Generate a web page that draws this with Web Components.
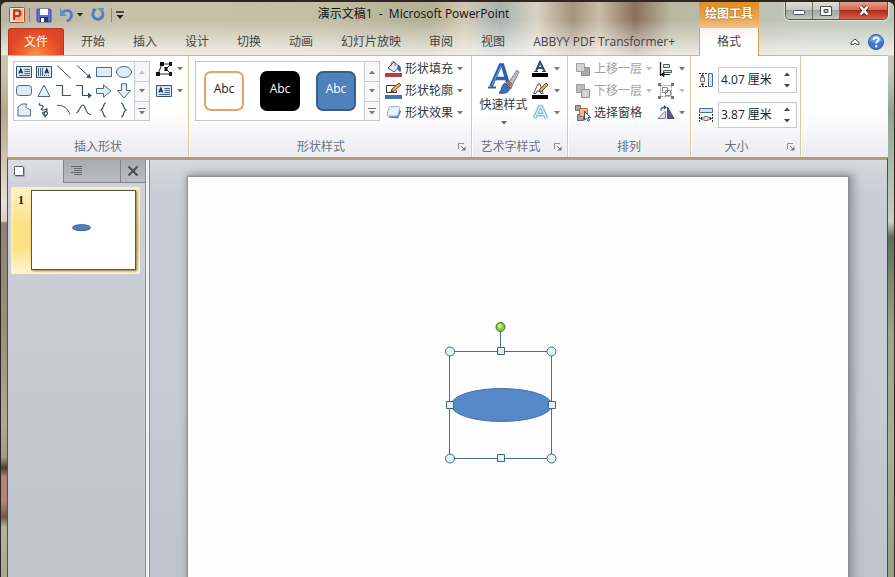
<!DOCTYPE html>
<html lang="zh-CN">
<head>
<meta charset="utf-8">
<title>演示文稿1 - Microsoft PowerPoint</title>
<style>
  html, body { margin: 0; height: 100%; }
  body {
    font: 12px/16px "Open Sans", "Noto Sans CJK SC", sans-serif;
    color: #3b3b3b; background: #2a2320; overflow: hidden;
  }
</style>
</head>
<body>
<app-window></app-window>
<script>
const ICONS = {
  ppt: [16, 16, `<rect x=".5" y=".5" width="15" height="15" rx="1" fill="#fbe0d2" stroke="#b8482a"/><path d="M2 2h12v12H2z" fill="#f4b394"/><path d="M2 2h8l-3 12H2z" fill="#fff" opacity=".5"/><path d="M5.2 13V3.500h3.300a2.800 2.800 0 0 1 0 5.600H5.200" fill="none" stroke="#c23f16" stroke-width="2.400"/>`],
  save: [16, 16, `<path d="M1 2h13l1 1v12H2l-1-1z" fill="#5a6fce" stroke="#3a4da6"/><path d="M4 2h8v6H4z" fill="#f4f7ff"/><path d="M4 10h8v5H4z" fill="#27356f"/><path d="M5 11h3v4H5z" fill="#fff"/>`],
  undo: [16, 16, `<path d="M3.500 5.500C8 1.500 13 4 12.500 8.500 12.300 11 10.500 13 8 14.500" fill="none" stroke="#4a7ccc" stroke-width="2.600"/><path d="M1 1.500v7.500h7z" fill="#5d92dc"/>`],
  redo: [16, 16, `<path d="M4.500 3.500A5 5 0 1 0 12 4.500" fill="none" stroke="#4a7ccc" stroke-width="3"/><path d="M7.500 1H14l-1.500 6.500z" fill="#5d92dc"/><path d="M2 1.500l5 .5-3 4z" fill="#4a7ccc"/>`],
  custom: [10, 12, `<path d="M1 3h8" stroke="#222" stroke-width="1.500"/><path d="M1.500 6h7L5 10z" fill="#222"/>`],
  min: [14, 10, `<rect x="1.500" y="4.500" width="11" height="4" rx="1" fill="#fff" stroke="#4c5157"/>`],
  max: [14, 10, `<path d="M1.500.5h11v9h-11z" fill="#fff" stroke="#4c5157"/><path d="M5 3.500h4v3H5z" fill="#b9bdb8" stroke="#4c5157"/>`],
  winclose: [14, 11, `<path d="M3.500 1.500l7 8M10.500 1.500l-7 8" stroke="#5a2420" stroke-width="4.200"/><path d="M3.500 1.500l7 8M10.500 1.500l-7 8" stroke="#fff" stroke-width="2.600"/>`],
  up: [10, 8, `<path d="M1 6.500v-2L5 1l4 3.500v2H6.800L5 5 3.200 6.500z" fill="#fff" stroke="#444"/>`],
  help: [16, 16, `<circle cx="8" cy="8" r="7.500" fill="#3f78c8" stroke="#275aa6"/><path d="M1.500 7a6.500 6 0 0 1 13 0c-4 2-9 2-13 0" fill="#7caae6" opacity=".7"/><path d="M5.500 6c0-3.600 5.400-3.300 5.100-.4C10.400 7.300 8.200 7.300 8.200 9.600" fill="none" stroke="#fff" stroke-width="1.900"/><circle cx="8.200" cy="12.300" r="1.200" fill="#fff"/>`],
  textbox: [16, 14, `<path d="M.5 1.500h15v11H.5z" fill="#d9e7f5" stroke="#35506c"/><path d="M3 8.500L4.800 4 6.500 8.500M3.500 7h2.500" fill="none" stroke="#1f2f44" stroke-width="1.300"/><path d="M8.500 4.500H14M8.500 6.500H14M8.500 8.500H14M3 10.500h11" stroke="#41658c"/>`],
  vtextbox: [16, 14, `<path d="M.5 1.500h15v11H.5z" fill="#d9e7f5" stroke="#35506c"/><path d="M9 8.500L10.800 4l1.700 4.500M9.500 7H12" fill="none" stroke="#1f2f44" stroke-width="1.300"/><path d="M2.500 3v8M4.500 3v8M6.500 3v8M8.500 10v1M10.500 10v1M12.500 10v1" stroke="#41658c"/>`],
  line: [16, 16, `<path d="M1 1.500l14 13" stroke="#3e4f63"/>`],
  arrowline: [16, 16, `<path d="M1 1.500l12 11" stroke="#3e4f63"/><path d="M15 14.500l-1.500-5-3.500 4z" fill="#3e4f63"/>`],
  rect: [16, 16, `<path d="M.5 3.500h15v9H.5z" fill="#dfeaf4" stroke="#46688c"/>`],
  oval: [16, 16, `<ellipse cx="8" cy="8" rx="7.500" ry="5.500" fill="#dfeaf4" stroke="#46688c"/>`],
  round: [16, 16, `<rect x=".5" y="2.500" width="15" height="10" rx="3" fill="#dfeaf4" stroke="#46688c"/>`],
  tri: [16, 16, `<path d="M8 2l6 11.500H2z" fill="#e4eef6" stroke="#46688c"/>`],
  elbow: [16, 16, `<path d="M0 2.500h6.500v10H15" fill="none" stroke="#3e4f63" stroke-width="1.200"/>`],
  elbowarrow: [16, 16, `<path d="M0 2.500h6.500v10H13" fill="none" stroke="#3e4f63" stroke-width="1.200"/><path d="M16 12.500l-4-3v6z" fill="#3e4f63"/>`],
  right: [16, 16, `<path d="M.5 5.500h7V1.800L15 8l-7.500 6.200v-3.700h-7z" fill="#e4eef6" stroke="#46688c"/>`],
  down: [16, 16, `<path d="M5.500.8h5v6.700h4L8 15 1.500 7.500h4z" fill="#e4eef6" stroke="#46688c"/>`],
  freeform: [16, 16, `<path d="M2 5l4-3h5c-3 4 1 4.500 3.500 5.500V14H2z" fill="#e4eef6" stroke="#46688c"/>`],
  scribble: [16, 16, `<path d="M4 1C1 5 7 2 7 4.500S3 8 7 8s4-3 4 0-6 1-4 4 6 0 4-2-5 4-1 5" fill="none" stroke="#3e4f63" stroke-width="1.200"/>`],
  arc: [16, 16, `<path d="M1 3.500c6-1 11 3 13 9" fill="none" stroke="#3e4f63"/>`],
  curve: [16, 16, `<path d="M.5 11C4 9 4 3 7 3s2 10 8 9.500" fill="none" stroke="#3e4f63" stroke-width="1.100"/>`],
  lbrace: [16, 16, `<path d="M10 1C6.500 1 8.500 6.500 5 8c3.500 1.500 1.500 7 5 7" fill="none" stroke="#3e4f63" stroke-width="1.200"/>`],
  rbrace: [16, 16, `<path d="M5 1c3.500 0 1.500 5.500 5 7-3.500 1.500-1.500 7-5 7" fill="none" stroke="#3e4f63" stroke-width="1.200"/>`],
  editshape: [17, 16, `<path d="M6 3h9l-5 5 5 5H2z" fill="#fff" stroke="#222"/><path d="M4 1h4v4H4zM13 1h3v4h-3zM8.500 6h3v4h-3zM0 11h4v4H0zM13 11h3v4h-3z" fill="#111"/>`],
  fill: [18, 18, `<path d="M0 13h17v4H0z" fill="#b5403e"/><path d="M3 8l6-6 6 5-6 5z" fill="#e8edf5" stroke="#4c5b73"/><path d="M6 6c0-7 5-5 4 0" fill="none" stroke="#5c6476"/><path d="M13 5c3 0 3.500 4 2.500 7-2 0-2-3-3.500-4z" fill="#3a63a8"/>`],
  outline: [18, 18, `<path d="M0 13h17v4H0z" fill="#4472ae"/><path d="M1.500 3.500h9M1.500 3.500v7h10v-2" fill="none" stroke="#333"/><path d="M6 10l1-3 7-6 2 2-7 6z" fill="#f0b552" stroke="#70471c"/><path d="M6 10l.6-2 1.300 1.200z" fill="#222"/>`],
  effect: [18, 18, `<path d="M3 13.500l10 1 3-7-2-3z" fill="#5f7fb4"/><path d="M6 2.500h7.500c1 0 1.500.8 1.200 2l-1.500 6c-.3 1-1 1.500-2 1.500H3.500c-1 0-1.600-.8-1.300-2l1.600-5.800c.3-1 1.200-1.700 2.200-1.700z" fill="#eaf0fa" stroke="#9cacd0"/>`],
  quick: [32, 36, `<path d="M3 25.500L12.500 4h2L21 25.500M7.500 17.500h11" fill="none" stroke="#2d62b0" stroke-width="3.600"/><path d="M0 26.500h8M17 26.500h7" stroke="#2d62b0" stroke-width="2"/><path d="M4 24L13 5" stroke="#7aa9e3"/><path d="M19 24L29 9l2 2-8 16z" fill="#b9bec8" stroke="#777e8c"/><path d="M17 22l5 5c-1 5-6 6-11 5 3-2 2-8 6-10z" fill="#3f6fb7" stroke="#2f558f"/><path d="M18 22l4 4 2.500-3-3.500-4z" fill="#a3744a"/>`],
  fontcolor: [18, 18, `<path d="M0 13h16v4H0z" fill="#000"/><path d="M4 11L8 2l4.500 9M5.500 8h5.500" fill="none" stroke="#2b4a7c" stroke-width="2"/><path d="M2 11.500h4M10 11.500h4" stroke="#2b4a7c"/>`],
  fontline: [18, 18, `<path d="M0 13h16v4H0z" fill="#000"/><path d="M1.500 11.500L6 2h2l3 9.500H9L8 9H5l-1 2.500z" fill="#fff" stroke="#555"/><path d="M7 10l1-3 6-6 2 2-6 6z" fill="#e8ae60" stroke="#70471c"/>`],
  fonteffect: [18, 18, `<path d="M2.500 14.500L7.500 3h2l5 11.500M5 10.500h7" fill="none" stroke="#a5d6ec" stroke-width="4.500" opacity=".7"/><path d="M2.500 14.500L7.500 3h2l5 11.500M5 10.500h7" fill="none" stroke="#6cb6d8" stroke-width="3"/><path d="M2.500 14.500L7.500 3h2l5 11.500M5 10.500h7" fill="none" stroke="#fff" stroke-width="1.200"/>`],
  forward: [16, 16, `<path d="M6.500 6.500h8v8h-8z" fill="#a9a9a9" stroke="#8f8f8f"/><path d="M1.500 2.500h8v8h-8z" fill="#d4d4d4" stroke="#a0a0a0"/>`],
  backward: [16, 16, `<path d="M1.500 1.500h8v8h-8z" fill="#bdbdbd" stroke="#a0a0a0"/><path d="M6.500 6.500h8v8h-8z" fill="#d4d4d4" stroke="#8f8f8f"/>`],
  selpane: [16, 17, `<path d="M.5.5h5v5h-5zM2.500 9.500h6v6h-6z" fill="#aaa" stroke="#6d6d6d"/><path d="M4.500 3.500h8v8h-8z" fill="#f2bb80" stroke="#a96e31"/><path d="M9.500 6v9l2-1.800 1.500 3 1.500-.8-1.500-2.900h2.500z" fill="#fff" stroke="#33507d"/>`],
  align: [16, 16, `<path d="M2.500 1v14" stroke="#222" stroke-width="1.400"/><path d="M5.500 3.500h6v3h-6z" fill="#dbe3ee" stroke="#4d5868"/><path d="M5.500 9.500h8v2h-8z" fill="#dbe3ee" stroke="#4d5868"/><path d="M3 13.500h9M6 11.500l-3 2 3 2z" stroke="#222" fill="#222"/>`],
  group: [16, 16, `<path d="M2.500 2.500h11v11h-11z" fill="none" stroke="#999" stroke-dasharray="2 1"/><path d="M4.500 4.500h5v5h-5zM7.500 7.500h5v5h-5z" fill="none" stroke="#888"/><path d="M0 0h3v3H0zM13 0h3v3h-3zM0 13h3v3H0zM13 13h3v3h-3z" fill="#777"/>`],
  rotate: [18, 16, `<path d="M8.500 6v7.500H1z" fill="#dde1e8" stroke="#7e8692"/><path d="M10.500 2v11.500h6.500z" fill="#66569a" stroke="#4a3d7c"/><path d="M4 5.500c0-2.500 2-3.500 4-3" fill="none" stroke="#35507e" stroke-width="1.300"/><path d="M7 0l3 2.500-3 2z" fill="#35507e"/>`],
  height: [16, 18, `<path d="M10.500 2.500h4v13h-4z" fill="#d5e2f3" stroke="#4e6c95"/><path d="M1 2.500h8M1 15.500h8" stroke="#333" stroke-dasharray="2 1"/><path d="M2.500 6.500h4v4h-4z" fill="#eee" stroke="#777"/><path d="M4.500 3L2.500 5.500h4zM4.500 15l-2-2.500h4z" fill="#222"/>`],
  width: [16, 18, `<path d="M1.500 2.500h13v4h-13z" fill="#d5e2f3" stroke="#4e6c95"/><path d="M1.500 8v8M14.500 8v8" stroke="#333" stroke-dasharray="2 1"/><path d="M6 10.500h4v4H6z" fill="#eee" stroke="#777"/><path d="M2 12.500L4.500 10.500v4zM14 12.500l-2.500-2v4z" fill="#222"/>`],
  launcher: [8, 8, `<path d="M.5 6V.5H6" fill="none" stroke="#8a8f99"/><path d="M3 3l3 3" stroke="#777"/><path d="M7.500 3.500v4h-4z" fill="#777"/>`],
  slide: [11, 11, `<path d="M1.500 1.500h9v9h-9z" fill="#777"/><rect x=".5" y=".5" width="9" height="9" rx="1" fill="#fff" stroke="#55585c"/>`],
  outlinetab: [12, 10, `<path d="M0 .5h11M3 2.500h8M3 4.500h8M0 6.500h11M3 8.500h8" stroke="#65686d"/>`],
  close: [12, 12, `<path d="M1.500 1.500l9 9M10.500 1.500l-9 9" stroke="#4a4c50" stroke-width="2"/>`],
  caret: [6, 4, `<path d="M0 0h6L3 3.500z" fill="currentColor"/>`],
  caretup: [6, 4, `<path d="M0 4h6L3 .5z" fill="currentColor"/>`],
  more: [8, 8, `<path d="M0 1.500h8" stroke="currentColor"/><path d="M1 4h6L4 7.500z" fill="currentColor"/>`]
};

const BUTTON_RESET = `button{font:inherit;color:inherit;background:none;border:0;padding:0;margin:0;display:flex;align-items:center;}`;

function define(name, render) {
  customElements.define(name, class extends HTMLElement {
    connectedCallback() {
      if (this.shadowRoot) return;
      this.attachShadow({ mode: "open" }).innerHTML = render(this);
    }
  });
}
const attr = (el, name, fallback = "") => el.getAttribute(name) ?? fallback;

define("ui-icon", el => {
  const [w, h, body] = ICONS[attr(el, "name")];
  return `<style>:host{display:block;flex:none;width:${w}px;height:${h}px}svg{display:block}</style>
    <svg width="${w}" height="${h}" viewBox="0 0 ${w} ${h}" aria-hidden="true">${body}</svg>`;
});

define("tool-button", el => `<style>
  :host{display:block;color:#33363b}
  :host([dim]){color:#a0a0a0}
  ${BUTTON_RESET}
  button{height:22px;gap:2px;white-space:nowrap}
  .art{width:18px;display:flex;justify-content:center}
  .caret{margin-left:2px;color:#777}
  :host([dim]) .caret{color:#bbb}
  </style>
  <button type="button" aria-label="${attr(el, "label")}" ${el.hasAttribute("dim") ? "disabled" : ""}>
    <span class="art"><ui-icon name="${attr(el, "icon")}"></ui-icon></span><slot></slot>
    ${el.hasAttribute("menu") ? `<ui-icon class="caret" name="caret"></ui-icon>` : ""}
  </button>`);

define("gallery-box", () => `<style>
  :host{display:flex;height:60px;border:1px solid #c3c5c9;box-sizing:border-box;background:#fff}
  .items{flex:1}
  .scroll{display:grid;grid-template-rows:1fr 1fr 1fr;width:14px;border-left:1px solid #c9cacf;color:#777}
  ${BUTTON_RESET}
  button{justify-content:center;background:#f7f7fa}
  button+button{border-top:1px solid #c9cacf}
  :host([top]) button:first-child{color:#c6c6cc}
  </style>
  <div class="items"><slot></slot></div>
  <div class="scroll">
    <button type="button" aria-label="上一行"><ui-icon name="caretup"></ui-icon></button>
    <button type="button" aria-label="下一行"><ui-icon name="caret"></ui-icon></button>
    <button type="button" aria-label="其他"><ui-icon name="more"></ui-icon></button>
  </div>`);

define("shape-gallery", () => {
  const shapes = { textbox: "文本框", vtextbox: "垂直文本框", line: "直线", arrowline: "箭头", rect: "矩形", oval: "椭圆",
    round: "圆角矩形", tri: "等腰三角形", elbow: "肘形连接符", elbowarrow: "肘形箭头连接符", right: "右箭头", down: "下箭头",
    freeform: "任意多边形", scribble: "自由曲线", arc: "弧形", curve: "曲线", lbrace: "左大括号", rbrace: "右大括号" };
  return `<style>:host{display:block;width:137px}${BUTTON_RESET}
    .grid{display:grid;grid-template-columns:repeat(6,20px);grid-auto-rows:19px}
    button{justify-content:center}</style>
    <gallery-box top><div class="grid">${Object.entries(shapes).map(([k, v]) =>
      `<button type="button" aria-label="${v}"><ui-icon name="${k}"></ui-icon></button>`).join("")}</div></gallery-box>`;
});

define("style-gallery", () => `<style>:host{display:block;width:185px}${BUTTON_RESET}
  .row{display:flex;gap:16px;padding:9px 8px 0}
  button{box-sizing:border-box;width:40px;height:40px;border-radius:7px;border:2px solid;justify-content:center;padding-bottom:4px}
  .a{background:#fff;border-color:#e8a265;color:#222}
  .b{background:#000;border-color:#000;color:#fff}
  .c{background:#4f81bd;border-color:#385d8a;color:#fff}</style>
  <gallery-box><div class="row">
    <button type="button" class="a">Abc</button><button type="button" class="b">Abc</button><button type="button" class="c">Abc</button>
  </div></gallery-box>`);

define("ribbon-group", el => `<style>
  :host{display:flex;flex-direction:column;box-sizing:border-box;border-right:1px solid #dfc99a;box-shadow:1px 0 #fff;flex:none}
  .body{flex:1;display:flex;align-items:flex-start;padding-top:5px}
  footer{display:flex;align-items:center;height:20px;padding:0 5px;color:#6b7280}
  footer span{flex:1;text-align:center;white-space:nowrap}
  :host([launcher]) span{padding-right:10px}
  ${BUTTON_RESET}</style>
  <div class="body"><slot></slot></div>
  <footer><span>${attr(el, "label")}</span>${el.hasAttribute("launcher") ?
    `<button type="button" aria-label="${attr(el, "label")}选项"><ui-icon name="launcher"></ui-icon></button>` : ""}</footer>`);

define("size-field", el => `<style>
  :host{display:flex;align-items:center;gap:4px}
  .field{display:flex;flex:1;min-width:0;box-sizing:border-box;height:26px;border:1px solid #c6c8cd;background:#fff}
  input{flex:1;width:0;min-width:0;border:0;padding:0 0 0 2px;background:none;font:inherit;color:#222;outline:0}
  .spin{display:grid;grid-template-rows:1fr 1fr;width:18px;color:#444}
  ${BUTTON_RESET} button{justify-content:center}</style>
  <label for="v"><ui-icon name="${attr(el, "icon")}"></ui-icon></label>
  <div class="field"><input id="v" type="text" aria-label="${attr(el, "label")}" value="${attr(el, "value")}">
  <div class="spin"><button type="button" aria-label="增大"><ui-icon name="caretup"></ui-icon></button>
  <button type="button" aria-label="减小"><ui-icon name="caret"></ui-icon></button></div></div>`);

define("ribbon-tabs", () => `<style>
  :host{display:flex;align-items:flex-end;padding-right:10px}
  ${BUTTON_RESET}
  button{height:27px;padding:0 14px;white-space:nowrap;color:#444}
  .file{width:56px;justify-content:center;padding:0;margin-right:3px;color:#fff;border-radius:3px 3px 0 0;
    border:1px solid #b8351c;border-bottom:0;box-sizing:border-box;
    background:radial-gradient(ellipse at 50% 110%,#f79a4c 0,#ee5a2c 45%,#dc4526 75%)}
  </style>
  <button type="button" class="file">文件</button>
  ${["开始", "插入", "设计", "切换", "动画", "幻灯片放映", "审阅", "视图", "ABBYY PDF Transformer+"]
    .map(t => `<button type="button" role="tab">${t}</button>`).join("")}`);

define("quick-access", () => `<style>
  :host{display:flex;align-items:center;width:119px;height:26px;padding-left:1px}
  ${BUTTON_RESET}
  .sep{flex:none;width:1px;height:14px;background:#8c8877;margin:0 6px 0 4px}
  .gap{margin-left:7px}.near{margin-left:2px;color:#222}
  .last{margin:0 3px 0 5px}</style>
  <button type="button" aria-label="PowerPoint"><ui-icon name="ppt"></ui-icon></button><span class="sep"></span>
  <button type="button" aria-label="保存"><ui-icon name="save"></ui-icon></button>
  <button type="button" class="gap" aria-label="撤消"><ui-icon name="undo"></ui-icon></button>
  <button type="button" class="near" aria-label="撤消列表"><ui-icon name="caret"></ui-icon></button>
  <button type="button" class="gap" aria-label="重复"><ui-icon name="redo"></ui-icon></button>
  <span class="sep last"></span>
  <button type="button" aria-label="自定义快速访问工具栏"><ui-icon name="custom"></ui-icon></button>`);

define("window-controls", () => `<style>
  :host{display:flex;height:17px;border:1px solid #55584f;border-top:0;border-radius:0 0 5px 5px;overflow:hidden;box-shadow:0 0 1px 1px #ffffff80}
  ${BUTTON_RESET}
  button{width:27px;justify-content:center;background:linear-gradient(#dcdfd8,#c2c6be 48%,#a0a69e 50%,#c3c7bd);border-right:1px solid #6d7068}
  .x{width:47px;border-right:0;background:linear-gradient(#e3a092,#cf6652 48%,#b02a18 50%,#d0634b)}</style>
  <button type="button" aria-label="最小化"><ui-icon name="min"></ui-icon></button>
  <button type="button" aria-label="最大化"><ui-icon name="max"></ui-icon></button>
  <button type="button" class="x" aria-label="关闭"><ui-icon name="winclose"></ui-icon></button>`);

define("window-header", () => `<style>
  :host{display:grid;grid-template-columns:auto 60px 1fr;grid-template-rows:26px 27px}
  .title{display:flex;align-items:center;min-width:0}
  h1{flex:1;margin:0;font:inherit;font-size:12px;line-height:24px;padding-bottom:2px;color:#111;text-align:center;white-space:pre}
  .ctx{background:linear-gradient(#e08d22,#e9a552 60%,#f0c285);color:#fff;font-weight:bold;display:flex;align-items:center;justify-content:center;padding-bottom:3px;text-shadow:0 0 2px #8a4d10}
  .controls{display:flex;justify-content:flex-end;align-items:flex-start}
  ${BUTTON_RESET}
  .fmt{justify-content:center;background:linear-gradient(#f9f1ea,#fff 40%);border:solid #dca23f;border-width:0 1px;box-sizing:border-box;height:28px;position:relative;color:#444}
  .help{display:flex;justify-content:flex-end;align-items:center;gap:8px;padding-right:4px}</style>
  <div class="title"><quick-access></quick-access><h1>演示文稿1  -  Microsoft PowerPoint</h1></div>
  <div class="ctx">绘图工具</div>
  <div class="controls"><window-controls></window-controls></div>
  <ribbon-tabs></ribbon-tabs>
  <button type="button" role="tab" aria-selected="true" class="fmt">格式</button>
  <div class="help"><button type="button" aria-label="功能区最小化"><ui-icon name="up"></ui-icon></button>
  <button type="button" aria-label="帮助"><ui-icon name="help"></ui-icon></button></div>`);

define("format-ribbon", () => `<style>
  :host{display:flex;height:102px;box-sizing:border-box;border-top:1px solid #d9b46c;
    background:linear-gradient(#fff 55%,#ebebf0);overflow:hidden}
  .col{display:flex;flex-direction:column}
  .insert{width:181px}.insert .col{margin-left:5px;margin-top:-3px}
  shape-gallery{margin-left:5px}
  .styles{width:283px}.styles style-gallery{margin-left:6px}.styles .col{margin:-3px 0 0 5px}
  .word{width:96px}.word .col{margin:-3px 0 0 4px}
  .arrange{width:123px}.arrange .col{margin:-3px 0 0 6px}.arrange .col+.col{margin-left:5px}
  .size{width:110px}.sizes{flex:1;min-width:0;display:flex;flex-direction:column;gap:9px;padding:6px 3px 0 7px}
  .quick{font:inherit;color:#33363b;background:none;border:0;padding:0;margin-left:7px;width:49px;display:flex;flex-direction:column;align-items:center;white-space:nowrap}
  .quick ui-icon:last-child{margin-top:8px;color:#666}</style>
  <ribbon-group class="insert" label="插入形状"><shape-gallery></shape-gallery>
    <div class="col"><tool-button icon="editshape" label="编辑形状" menu></tool-button><tool-button icon="textbox" label="文本框" menu></tool-button></div></ribbon-group>
  <ribbon-group class="styles" label="形状样式" launcher><style-gallery></style-gallery>
    <div class="col"><tool-button icon="fill" label="形状填充" menu>形状填充</tool-button><tool-button icon="outline" label="形状轮廓" menu>形状轮廓</tool-button><tool-button icon="effect" label="形状效果" menu>形状效果</tool-button></div></ribbon-group>
  <ribbon-group class="word" label="艺术字样式" launcher>
    <button type="button" class="quick"><ui-icon name="quick"></ui-icon>快速样式<ui-icon name="caret"></ui-icon></button>
    <div class="col"><tool-button icon="fontcolor" label="文本填充" menu></tool-button><tool-button icon="fontline" label="文本轮廓" menu></tool-button><tool-button icon="fonteffect" label="文本效果" menu></tool-button></div></ribbon-group>
  <ribbon-group class="arrange" label="排列">
    <div class="col"><tool-button icon="forward" label="上移一层" menu dim>上移一层</tool-button><tool-button icon="backward" label="下移一层" menu dim>下移一层</tool-button><tool-button icon="selpane" label="选择窗格">选择窗格</tool-button></div>
    <div class="col"><tool-button icon="align" label="对齐" menu></tool-button><tool-button icon="group" label="组合" menu dim></tool-button><tool-button icon="rotate" label="旋转" menu></tool-button></div></ribbon-group>
  <ribbon-group class="size" label="大小" launcher><div class="sizes">
    <size-field icon="height" label="形状高度" value="4.07 厘米"></size-field>
    <size-field icon="width" label="形状宽度" value="3.87 厘米"></size-field></div></ribbon-group>`);

define("slide-thumb", () => `<style>
  :host{display:flex;align-items:flex-start;margin:4px 5px 0 3px;padding:3px 4px 4px 0;border-radius:2px;
   background:linear-gradient(#ffffff90,#ffffff00 45%,#ffffff00 70%,#ffffffb0),linear-gradient(90deg,#fde27c,#fbe08b 20%,#eed58a);box-shadow:inset 0 0 2px 1px #fff2b8}
  b{width:20px;text-align:center;font:bold 12px/20px "Liberation Serif",serif;color:#222}
  svg{display:block;flex:1;min-width:0;background:#fff;border:1px solid #555;box-shadow:1px 1px 2px #8a7a40}</style>
  <b>1</b><svg viewBox="0 0 104 79" role="img" aria-label="幻灯片 1"><ellipse cx="50" cy="37" rx="9" ry="3" fill="#4f81bd" stroke="#385d8a"/></svg>`);

define("slide-pane", () => `<style>
  :host{display:block;width:137px;flex:none;background:linear-gradient(#d0d3d9,#c8cbd2 40%,#bfc3ca)}
  nav{display:grid;grid-template-columns:55px 1fr 25px;height:23px}
  ${BUTTON_RESET}
  button{padding-left:7px;border:solid #80838a;border-width:0 0 1px 1px;background:linear-gradient(#a9abb1,#b9bcc3)}
  button:first-child{padding-left:6px;border:0;background:linear-gradient(#dcdee3,#d0d3d9)}
  button:last-child{padding:0;justify-content:center}</style>
  <nav><button type="button" aria-label="幻灯片"><ui-icon name="slide"></ui-icon></button>
  <button type="button" aria-label="大纲"><ui-icon name="outlinetab"></ui-icon></button>
  <button type="button" aria-label="关闭窗格"><ui-icon name="close"></ui-icon></button></nav>
  <slide-thumb></slide-thumb>`);

define("slide-canvas", () => {
  const corner = (x, y) => `<circle cx="${x}" cy="${y}" r="4.500"/>`;
  const side = (x, y) => `<path d="M${x - 3.5} ${y - 3.5}h7v7h-7z"/>`;
  return `<style>
  :host{display:block;flex:1;min-width:0;overflow:hidden;padding:17px 39px 0 38px;background:linear-gradient(#d6dade,#c9cdd5 8%,#c6cad2 60%,#bfc3cb)}
  svg{display:block;width:100%;background:#fefefe;box-shadow:0 0 2px 1px #85888c,3px 0 9px 3px #92969d}</style>
  <svg viewBox="0 0 660 495" role="img" aria-label="幻灯片编辑区">
    <ellipse cx="313.500" cy="228" rx="50.500" ry="16.500" fill="#5788c9" stroke="#4a72a8"/>
    <path d="M261.500 174.500h102v107h-102zM312.500 174v-20" fill="none" stroke="#44708c"/>
    <g fill="#e2f3f8" stroke="#40687a">${corner(262, 174.5)}${corner(363.5, 174.5)}${corner(262, 281.5)}${corner(363.5, 281.5)}
    ${side(313, 174)}${side(262, 228)}${side(364, 228)}${side(313, 281)}</g>
    <circle cx="312.500" cy="150" r="4.500" fill="#8ad13e" stroke="#416d28"/>
    <circle cx="312" cy="149" r="2" fill="#c3ef8d"/>
  </svg>`;
});

define("app-window", () => `<style>
  :host{display:flex;flex-direction:column;height:100vh;box-sizing:border-box;border:solid #30251f;border-width:2px 1px 0;border-radius:7px 7px 0 0;overflow:hidden;padding:0 6px 0 7px;
    background:
      linear-gradient(#ffffff00 18px,#ffffffb8 53px,#ffffff00 54px) 0 0/100% 54px no-repeat,
      linear-gradient(90deg,#b9b5a3,#c7c1a8 14%,#c4bea4 35%,#b3af94 48%,#d1c8b4 52%,#a7b2b0 56%,#d9d2c2 60%,#a4937f 64%,#c9bca8 67%,#89705e 71%,#bab7a0 75%,#b9bbab 80%,#c2c6b9 90%,#bfc6b8) 0 0/100% 54px no-repeat,
      linear-gradient(#c9c5ae 70px,#b7a58e 110px,#e6e0d8 200px,#d8d0c3 219px,#8d8574 221px,#98907c 330px,#b1a98f 420px,#a49c82 455px,#4e3d30 466px,#b5837d 475px,#b5837d 500px,#6c5947 515px,#b5b399 525px,#a9a98d) 0 0/50% 100% no-repeat,
      linear-gradient(#c2c8bb 70px,#8fa590 110px,#c8d0c3 220px,#5d6e5b 235px,#9aa590 330px,#a6ae9c 450px,#96a08c)}
  main{flex:1;min-height:0;display:flex;border-top:3px solid #ae9c80;border-left:1px solid #55504a;border-right:1px solid #44543f;margin-left:-1px}
  .split{width:3px;background:#edf2f5;border:solid #8a8d93;border-width:0 1px;flex:none}</style>
  <window-header></window-header>
  <format-ribbon></format-ribbon>
  <main><slide-pane></slide-pane><div class="split"></div><slide-canvas></slide-canvas></main>`);
</script>
</body>
</html>
